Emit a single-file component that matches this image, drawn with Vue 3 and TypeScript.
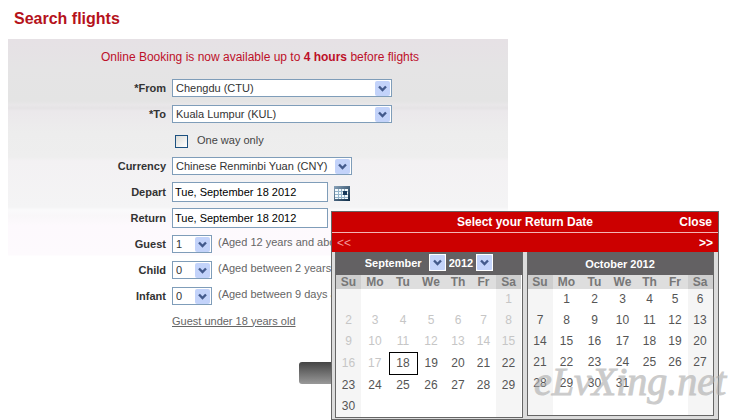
<script setup lang="ts">
import { ref } from 'vue'

interface Option { value: string; label: string }
interface Passenger { id: string; label: string; hint: string; count: string }
interface Day { n: number | null; past: boolean; selected: boolean }

const origin = ref('CTU')
const destination = ref('KUL')
const currency = ref('CNY')
const oneWay = ref(false)
const departDate = ref('Tue, September 18 2012')
const returnDate = ref('Tue, September 18 2012')
const month = ref('September')
const year = ref('2012')

const airports: Option[] = [
  { value: 'CTU', label: 'Chengdu (CTU)' },
  { value: 'KUL', label: 'Kuala Lumpur (KUL)' },
]

const passengers = ref<Passenger[]>([
  { id: 'guest', label: 'Guest', hint: '(Aged 12 years and above)', count: '1' },
  { id: 'child', label: 'Child', hint: '(Aged between 2 years and 12)', count: '0' },
  { id: 'infant', label: 'Infant', hint: '(Aged between 9 days and 2)', count: '0' },
])

const weekdays = ['Su', 'Mo', 'Tu', 'We', 'Th', 'Fr', 'Sa']

function buildWeeks(firstWeekday: number, length: number, today: number | null): Day[][] {
  return Array.from({ length: 6 }, (_, w) =>
    Array.from({ length: 7 }, (_, d) => {
      const n = w * 7 + d - firstWeekday + 1
      const valid = n >= 1 && n <= length
      return { n: valid ? n : null, past: today !== null && n < today, selected: n === today }
    }),
  )
}

const months = [
  { name: 'September 2012', editable: true, weeks: buildWeeks(6, 30, 18) },
  { name: 'October 2012', editable: false, weeks: buildWeeks(1, 31, null) },
]
</script>

<template>
  <main class="page">
    <h1>Search flights</h1>
    <form class="search" @submit.prevent>
      <p class="notice">Online Booking is now available up to <strong>4 hours</strong> before flights</p>

      <div class="row">
        <label class="name" for="from">*From</label>
        <span class="drop wide">
          <select id="from" v-model="origin">
            <option v-for="a in airports" :key="a.value" :value="a.value">{{ a.label }}</option>
          </select>
          <svg class="arrow" viewBox="0 0 15 15"><rect width="15" height="15" rx="2" /><path d="M4 5.5l3.5 3.5L11 5.5" /></svg>
        </span>
      </div>
      <div class="row">
        <label class="name" for="to">*To</label>
        <span class="drop wide">
          <select id="to" v-model="destination">
            <option v-for="a in airports" :key="a.value" :value="a.value">{{ a.label }}</option>
          </select>
          <svg class="arrow" viewBox="0 0 15 15"><rect width="15" height="15" rx="2" /><path d="M4 5.5l3.5 3.5L11 5.5" /></svg>
        </span>
      </div>
      <div class="row">
        <span></span>
        <label class="check"><input v-model="oneWay" type="checkbox" />One way only</label>
      </div>
      <div class="row">
        <label class="name" for="currency">Currency</label>
        <span class="drop medium">
          <select id="currency" v-model="currency">
            <option value="CNY">Chinese Renminbi Yuan (CNY)</option>
          </select>
          <svg class="arrow" viewBox="0 0 15 15"><rect width="15" height="15" rx="2" /><path d="M4 5.5l3.5 3.5L11 5.5" /></svg>
        </span>
      </div>
      <div class="row">
        <label class="name" for="depart">Depart</label>
        <div class="field">
          <input id="depart" v-model="departDate" class="date" type="text" />
          <button class="picker" type="button" aria-label="Choose departure date">
            <svg viewBox="0 0 16 15">
              <defs>
                <linearGradient id="frame" x1="0" y1="0" x2="1" y2="1">
                  <stop offset="0" stop-color="#8aa4bb" /><stop offset="1" stop-color="#0c2a45" />
                </linearGradient>
              </defs>
              <rect width="16" height="15" fill="url(#frame)" />
              <rect x="1" y="3" width="13" height="10" fill="#f4fafc" />
              <path d="M4.5 3v10M7.5 3v10M10.5 3v10M1 5.5h13M1 8.5h13M1 11.5h13" stroke="#94b4ca" fill="none" />
              <rect x="9" y="5" width="4" height="4" fill="#17395a" />
            </svg>
          </button>
        </div>
      </div>
      <div class="row">
        <label class="name" for="return">Return</label>
        <div class="field">
          <input id="return" v-model="returnDate" class="date" type="text" />

          <section class="popup" aria-label="Select your Return Date">
            <header class="bar title">
              <span></span>
              <strong>Select your Return Date</strong>
              <button type="button">Close</button>
            </header>
            <nav class="bar months">
              <button class="off" type="button">&lt;&lt;</button>
              <button type="button">&gt;&gt;</button>
            </nav>
            <div class="calendars">
              <div v-for="m in months" :key="m.name" class="calendar">
                <div class="caption">
                  <template v-if="m.editable">
                    <span class="pick">
                      <select v-model="month" class="month" aria-label="Month"><option>September</option></select>
                      <svg class="arrow" viewBox="0 0 15 15"><rect width="15" height="15" rx="1" /><path d="M4 5.5l3.5 3.5L11 5.5" /></svg>
                    </span>
                    <span class="pick">
                      <select v-model="year" class="year" aria-label="Year"><option>2012</option></select>
                      <svg class="arrow" viewBox="0 0 15 15"><rect width="15" height="15" rx="1" /><path d="M4 5.5l3.5 3.5L11 5.5" /></svg>
                    </span>
                  </template>
                  <span v-else class="fixed">{{ m.name }}</span>
                </div>
                <table>
                  <colgroup>
                    <col class="c25" /><col class="c28" /><col class="c28" /><col class="c28" /><col class="c26" /><col class="c25" /><col class="c25" />
                  </colgroup>
                  <thead>
                    <tr><th v-for="d in weekdays" :key="d" scope="col">{{ d }}</th></tr>
                  </thead>
                  <tbody>
                    <tr v-for="(week, w) in m.weeks" :key="w">
                      <td v-for="(day, d) in week" :key="d" :class="{ past: day.past, selected: day.selected }">{{ day.n }}</td>
                    </tr>
                  </tbody>
                </table>
              </div>
            </div>
          </section>
        </div>
      </div>
      <div v-for="p in passengers" :key="p.id" class="row">
        <label class="name" :for="p.id">{{ p.label }}</label>
        <div class="field">
          <span class="drop small">
            <select :id="p.id" v-model="p.count">
              <option v-for="n in 10" :key="n" :value="String(n - 1)">{{ n - 1 }}</option>
            </select>
            <svg class="arrow" viewBox="0 0 15 15"><rect width="15" height="15" rx="2" /><path d="M4 5.5l3.5 3.5L11 5.5" /></svg>
          </span>
          <span class="hint">{{ p.hint }}</span>
        </div>
      </div>
      <div class="row">
        <span></span>
        <a class="minor" href="#">Guest under 18 years old</a>
      </div>
      <button class="submit" type="submit" aria-label="Search"></button>
    </form>
    <span class="mark">eLvXing.net</span>
  </main>
</template>

<style>
body {
  background: #fff;
}
</style>

<style scoped>
* {
  box-sizing: border-box;
}

.page {
  position: relative;
  min-height: 100vh;
  padding: 0 8px;
  font: 11px/14px "Liberation Sans", Arial, sans-serif;
  color: #444;
}

h1 {
  margin: 0;
  padding: 9px 6px 10px;
  font-size: 16px;
  line-height: 20px;
  color: #b5121b;
}

.search {
  max-width: 500px;
  background: linear-gradient(
    #e6e1e5 0, #e5e4e5 30px, #e4e4e4 62px, #e9e7e9 66px, #e5e3e5 69px,
    #ebe8eb 72px, #ededed 94px, #eeeeee 118px, #f3f1f3 122px, #f4f4f5 168px,
    #fafafb 171px, #f9f7f9 177px, #fdf9fd 186px, #fdfafd 216px, #fff 217px
  );
}

.notice {
  margin: 0;
  padding: 10px 0 10px 4px;
  font-size: 12px;
  line-height: 16px;
  text-align: center;
  color: #bd1029;
}

.row {
  display: grid;
  grid-template-columns: 158px 1fr;
  column-gap: 6px;
  align-items: center;
  height: 26px;
}

.name {
  font-weight: bold;
  text-align: right;
  color: #333;
}

.field {
  position: relative;
  display: flex;
  align-items: center;
  gap: 6px;
}

.drop,
.pick {
  display: grid;
  align-items: center;
}

.drop {
  height: 18px;
  border: 1px solid #7f9db9;
  background: #fff;
}

.wide {
  width: 220px;
}

.medium {
  width: 180px;
}

.small {
  width: 40px;
}

select {
  grid-area: 1 / 1;
  width: 100%;
  height: 16px;
  margin: 0;
  padding: 0 3px;
  border: 0;
  border-radius: 0;
  appearance: none;
  background: transparent;
  font: inherit;
  color: #333;
}

.arrow {
  grid-area: 1 / 1;
  justify-self: end;
  width: 15px;
  height: 15px;
  margin-right: 1px;
  pointer-events: none;
}

.arrow rect {
  fill: #c3d3fa;
}

.arrow path {
  fill: none;
  stroke: #435a8c;
  stroke-width: 2.4;
}

.check {
  display: flex;
  align-items: center;
  gap: 9px;
  padding-left: 3px;
}

.check input {
  width: 13px;
  height: 13px;
  margin: 3px 0 0;
  border: 1px solid #1c5180;
  appearance: none;
  background: linear-gradient(135deg, #dcdcd7, #fff);
}

.date {
  width: 156px;
  height: 20px;
  margin: 0;
  padding: 0 2px;
  border: 1px solid #7f9db9;
  background: #fff;
  font: inherit;
  color: #000;
}

button {
  margin: 0;
  padding: 0;
  border: 0;
  background: none;
  font: inherit;
}

.picker {
  padding-top: 3px;
}

.picker svg {
  display: block;
  width: 16px;
  height: 15px;
}

.hint {
  padding-bottom: 4px;
  white-space: nowrap;
  color: #666;
}

.minor {
  justify-self: start;
  padding-bottom: 3px;
  color: #666;
}

.submit {
  display: block;
  width: 100px;
  height: 22px;
  margin: 27px 0 0 291px;
  border-radius: 3px;
  background: linear-gradient(#444, #999);
}

.popup {
  position: absolute;
  z-index: 1;
  top: 3px;
  left: 159px;
  width: 388px;
  padding-bottom: 1px;
  border: 1px solid #666;
  background: #dcdcdc;
  font-size: 12px;
}

.bar {
  background: #c00;
  color: #fff;
}

.bar button {
  font-weight: bold;
  color: #fff;
}

.title {
  display: grid;
  grid-template-columns: 1fr auto 1fr;
  align-items: center;
  height: 21px;
  padding: 0 6px;
  border-bottom: 1px solid #f3b5b5;
}

.title button {
  justify-self: end;
}

.months {
  display: flex;
  justify-content: space-between;
  align-items: center;
  height: 19px;
  padding: 0 5px;
}

.months .off {
  font-weight: normal;
  color: #f29a9a;
}

.calendars {
  display: flex;
  align-items: flex-start;
  gap: 4px;
  padding: 0 5px 0 3px;
}

.calendar {
  flex: 1;
  border: 1px solid #666;
  border-top: 0;
  background: #fff;
}

.caption {
  display: flex;
  justify-content: center;
  gap: 3px;
  height: 23px;
  padding-top: 2px;
  background: #636163;
  font-size: 11px;
  font-weight: bold;
  color: #fff;
}

.fixed {
  padding-top: 3px;
}

.pick {
  height: 17px;
}

.pick select {
  padding: 0;
  color: #fff;
}

.pick .month {
  width: 81px;
}

.pick .year {
  width: 44px;
}

.pick .arrow {
  width: 17px;
  height: 17px;
  margin: 0;
  border: 1px solid #fff;
  background: #fff;
}

table {
  width: 100%;
  table-layout: fixed;
  border-collapse: collapse;
}

.c25 {
  width: 25px;
}

.c26 {
  width: 26px;
}

.c28 {
  width: 28px;
}

th {
  height: 14px;
  padding: 0;
  background: #dedede;
  font-weight: bold;
  line-height: 14px;
  color: #777;
}

th:first-child,
th:last-child {
  background: #cecece;
}

td {
  height: 21px;
  padding: 0;
  text-align: center;
  line-height: 21px;
  color: #555;
}

td:first-child,
td:last-child {
  background: #f5f5f5;
}

.past {
  color: #c6c6c6;
}

.selected {
  border: 1px solid #000;
}

.mark {
  position: absolute;
  z-index: 2;
  top: 360px;
  left: 534px;
  font: italic 40px/44px "Liberation Serif", serif;
  color: #aaa;
  -webkit-text-stroke: 1px #aaa;
  opacity: 0.6;
  pointer-events: none;
}
</style>
